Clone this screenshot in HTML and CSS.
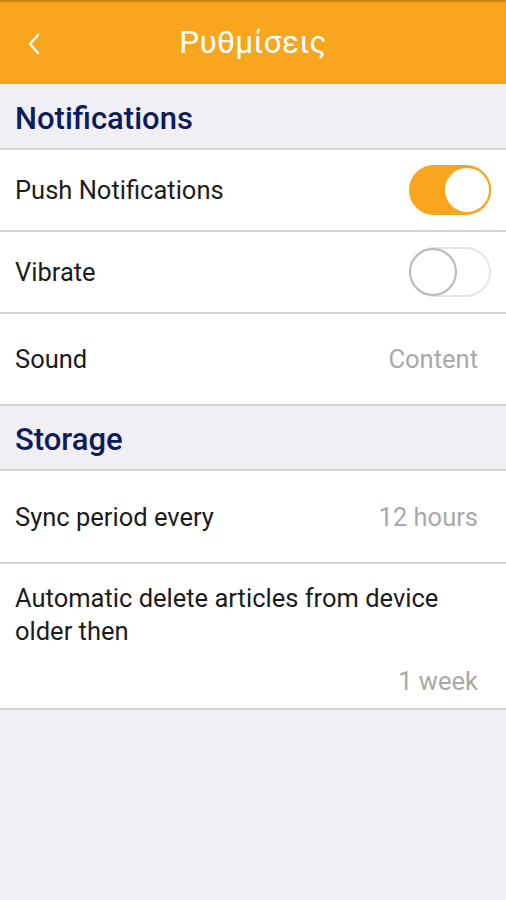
FILE: index.html
```html
<!DOCTYPE html>
<html lang="el">
<head>
  <meta charset="UTF-8">
  <meta name="viewport" content="width=device-width, initial-scale=1.0">
  <title>Ρυθμίσεις</title>
  <link rel="stylesheet" href="styles.css">
</head>
<body>
  <div class="topbar">
    <span class="back">
      <svg width="14" height="22" viewBox="0 0 14 22"><path d="M11 2 L3 11 L11 20" fill="none" stroke="#fff" stroke-width="2.4" stroke-linecap="round" stroke-linejoin="round"/></svg>
    </span>
    <h1>Ρυθμίσεις</h1>
  </div>

  <div class="section">Notifications</div>
  <div class="row">
    <span class="label">Push Notifications</span>
    <span class="switch on"><span class="knob"></span></span>
  </div>
  <div class="row">
    <span class="label">Vibrate</span>
    <span class="switch"><span class="knob"></span></span>
  </div>
  <div class="row tall">
    <span class="label">Sound</span>
    <span class="value">Content</span>
  </div>

  <div class="section storage">Storage</div>
  <div class="row tall sync">
    <span class="label">Sync period every</span>
    <span class="value">12 hours</span>
  </div>
  <div class="row block">
    <span class="label">Automatic delete articles from device older then</span>
    <span class="value">1 week</span>
  </div>
</body>
</html>
```

FILE: styles.css
```css
body {
  margin: 0;
  font-family: Roboto, "Noto Sans", sans-serif;
  background-color: #efeff4;
  color: #1c1c1c;
}
.topbar {
  height: 84px;
  background-color: #f8a61d;
  box-shadow: inset 0 3px 2px -1px rgba(120,70,0,0.35);
  display: flex;
  align-items: center;
  justify-content: center;
  position: relative;
}
.back {
  position: absolute;
  left: 27px;
  top: 33px;
  display: flex;
}
h1 {
  margin: 0;
  font-size: 31.5px;
  font-weight: 400;
  color: #fff;
  letter-spacing: 0.3px;
}
.section {
  height: 66px;
  box-sizing: border-box;
  padding: 4px 15px 0;
  display: flex;
  align-items: center;
  font-size: 31px;
  font-weight: 500;
  color: #0e1b5c;
  border-bottom: 2px solid #d3d3d6;
}
.section.storage {
  height: 65px;
}
.row {
  background: #fff;
  height: 82px;
  box-sizing: border-box;
  padding: 0 15px;
  display: flex;
  align-items: center;
  justify-content: space-between;
  border-bottom: 2px solid #d3d3d3;
  font-size: 25.5px;
}
.row.tall {
  height: 92px;
}
.row.sync {
  height: 93px;
}
.value {
  color: #a9a9a9;
  margin-right: 13px;
}
.row.block {
  height: 146px;
  display: block;
  padding-top: 18px;
  line-height: 33px;
}
.row.block .value {
  display: block;
  text-align: right;
  margin-top: 17px;
}
.switch {
  width: 82px;
  height: 50px;
  box-sizing: border-box;
  border: 2px solid #e6e6e6;
  border-radius: 25px;
  display: flex;
  align-items: center;
  background: #fff;
}
.knob {
  width: 48px;
  height: 48px;
  box-sizing: border-box;
  border-radius: 50%;
  border: 2px solid #b9b9b9;
  background: #fff;
  margin-left: -2px;
}
.switch.on {
  background: #f8a61d;
  border-color: #f8a61d;
  justify-content: flex-end;
}
.switch.on .knob {
  border-color: #f8a61d;
  margin-left: 0;
  margin-right: -2px;
}
```
